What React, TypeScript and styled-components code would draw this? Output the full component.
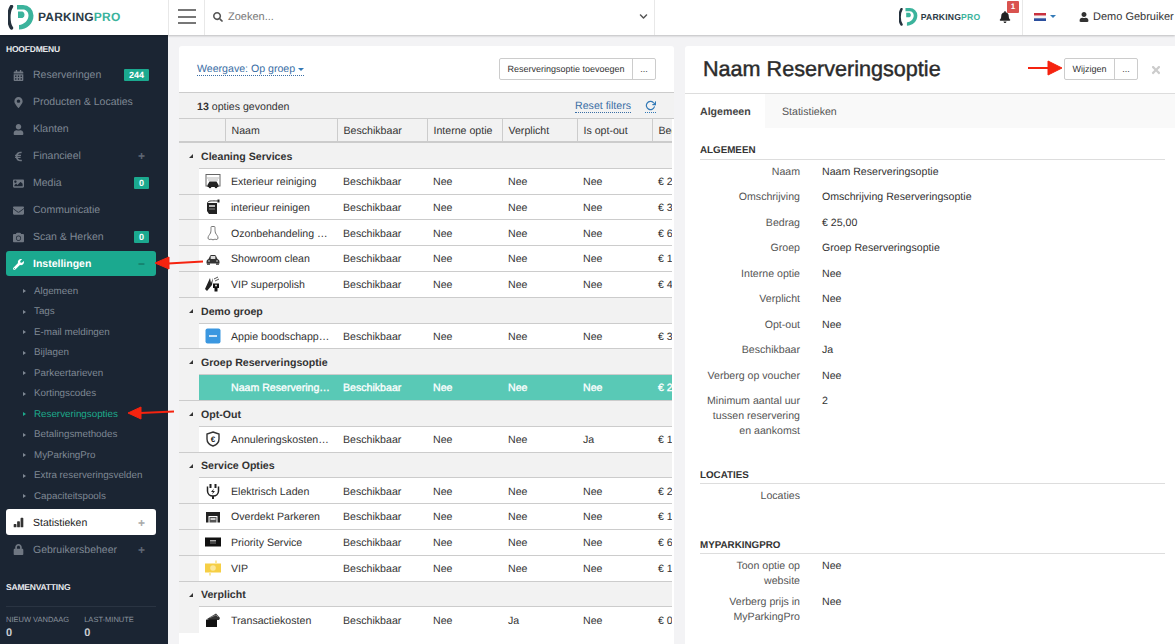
import React from "react";
import styled, { createGlobalStyle } from "styled-components";
import { FaCalendarAlt, FaMapMarkerAlt, FaUser, FaEuroSign, FaImage, FaEnvelope, FaCamera, FaWrench, FaLock, FaBell, FaSearch, FaTimes, FaChevronDown } from "react-icons/fa";
import { BsBarChartFill } from "react-icons/bs";
import { FiRotateCw } from "react-icons/fi";

const Global = createGlobalStyle`
  html, body { margin: 0; padding: 0; height: 100%; overflow: hidden; background: #f3f3f5; }
  body { font-family: "Liberation Sans", Arial, sans-serif; font-size: 10.6px; color: #333; text-rendering: geometricPrecision; }
  * { box-sizing: border-box; }
`;

const Page = styled.div`position: relative; width: 1175px; height: 644px; overflow: hidden; display: flex; flex-direction: column;`;
const Header = styled.header`height: 35px; flex: none; display: flex; align-items: stretch; background: #fff; box-shadow: 0 1px 2px rgba(0,0,0,.22); position: relative; z-index: 2;`;
const LogoBox = styled.div`width: 168px; display: flex; align-items: center; padding: 0 0 1px 8px; flex: none;`;
const LogoText = styled.span<{ $s: number }>`font-size: ${p => p.$s}px; font-weight: 700; letter-spacing: .2px; color: #2b3a46; margin-left: ${p => p.$s > 10 ? 4 : 3}px; b { color: #3bb39c; font-weight: 700; }`;
const Burger = styled.div`width: 37px; flex: none; border-left: 1px solid #e8e8e8; border-right: 1px solid #e8e8e8; display: flex; flex-direction: column; justify-content: center; align-items: center; gap: 4.5px; padding-bottom: 2px; i { display: block; width: 18px; height: 2px; background: #777; }`;
const Search = styled.div`width: 450px; flex: none; border-right: 1px solid #e8e8e8; display: flex; align-items: center; padding: 0 6px 2px 8px; color: #777; gap: 5px; font-size: 11px; svg { color: #555; } span { flex: 1; }`;
const HeaderRight = styled.div`flex: 1; display: flex; align-items: center; position: relative; padding-bottom: 2px;`;
const MiniLogo = styled.div`margin-left: 244px; display: flex; align-items: center; width: 85px;`;
const BellBox = styled.div`position: relative; margin-left: 15px; width: 14px; color: #222; display: flex; align-items: center;`;
const Badge1 = styled.span`position: absolute; left: 8px; top: -10px; width: 12px; height: 12px; background: #d9534f; color: #fff; font-size: 8px; font-weight: 700; text-align: center; line-height: 12px; border-radius: 1px;`;
const Sep = styled.div`width: 1px; align-self: stretch; background: #e8e8e8; margin: 0 0 -2px 9px;`;
const FlagBox = styled.div`display: flex; align-items: center; margin-left: 11px; gap: 4px;`;
const Caret = styled.span<{ $c?: string }>`display: inline-block; border-left: 3px solid transparent; border-right: 3px solid transparent; border-top: 3px solid ${p => p.$c || "#337ab7"};`;
const UserBox = styled.div`display: flex; align-items: center; margin-left: 23px; gap: 3px; color: #333; white-space: nowrap; font-size: 11px; svg { margin-right: 1px; }`;

const Body = styled.div`flex: 1; display: flex; min-height: 0;`;
const Side = styled.nav`width: 168px; flex: none; background: #1b2533; padding: 10px 12px 0 6px; margin-top: -1px;`;
const SideTitle = styled.div`font-size: 8.5px; font-weight: 700; color: #e8eaed; height: 13px; line-height: 11px; margin-bottom: 4px; text-transform: uppercase; letter-spacing: -.2px; white-space: nowrap;`;
const Item = styled.div<{ $v?: string }>`
  height: 27px; display: flex; align-items: center; border-radius: 3px; font-size: 10.5px;
  padding: 1px 2px 0 7px; position: relative;
  ${p => p.$v === "active" ? "background:#1ba98f;color:#fff;font-weight:700;height:25px;margin:1px 0;" : p.$v === "white" ? "background:#fff;color:#222;height:26px;margin:0.5px 0;" : "color:#7f8894;"}
`;
const ItemIcon = styled.span<{ $c?: string }>`width: 20px; flex: none; display: flex; align-items: center; color: ${p => p.$c || "#6f7782"};`;
const ItemLabel = styled.span`flex: 1; white-space: nowrap;`;
const Pill = styled.span`background: #1ba98f; color: #fff; font-size: 9px; font-weight: 700; height: 12px; line-height: 12px; padding: 0 5px; border-radius: 1px; margin-right: 5px;`;
const Plus = styled.span<{ $c?: string }>`color: ${p => p.$c || "#5e6773"}; font-size: 12px; font-weight: 700; margin-right: 9px; line-height: 1;`;
const SubList = styled.div`padding: 4px 0 2px 17px;`;
const SubItem = styled.div<{ $on?: boolean }>`height: 20.5px; display: flex; align-items: center; font-size: 9.8px; color: ${p => p.$on ? "#1dab8c" : "#7f8894"}; font-weight: 400; white-space: nowrap; &::before { content: ""; border-left: 3px solid ${p => p.$on ? "#1dab8c" : "#7f8894"}; border-top: 2.5px solid transparent; border-bottom: 2.5px solid transparent; margin-right: 8px; }`;
const Summary = styled.div`margin-top: 19px;`;
const SumLine = styled.div`border-top: 1px solid #2a3442; margin-top: 11px; padding-top: 8px; display: flex; gap: 15px;`;
const SumCol = styled.div`font-size: 7.5px; color: #8a929d; line-height: 10px; white-space: nowrap; b { display: block; color: #c9cdd2; font-size: 11px; line-height: 14px; margin-top: 1px; }`;

const Main = styled.main`flex: 1; display: flex; gap: 11px; padding: 11px 0 0 11px; min-width: 0;`;
const LeftCard = styled.section`width: 495px; flex: none; background: #fff; border-radius: 3px 3px 0 0; overflow: hidden; display: flex; flex-direction: column;`;
const Toolbar = styled.div`height: 47px; flex: none; display: flex; align-items: center; justify-content: space-between; padding: 0 18px; border-bottom: 1px solid #ccc;`;
const ViewLink = styled.span`color: #3a6ea5; font-size: 10.6px; border-bottom: 1px dotted #3a6ea5; line-height: 12px; display: flex; align-items: center; gap: 3px; margin-top: 1px;`;
const BtnGroup = styled.div`display: flex; height: 22px; border: 1px solid #ccc; border-radius: 2px; background: #fff; margin-top: -1px;`;
const Btn = styled.div<{ $w: number }>`width: ${p => p.$w}px; display: flex; align-items: center; justify-content: center; font-size: 9px; color: #333; & + & { border-left: 1px solid #ccc; }`;
const CountBar = styled.div`height: 26px; flex: none; background: #f2f2f2; display: flex; align-items: center; padding: 2px 18px 0 18px; border-bottom: 1px solid #ccc; b { color: #333; } `;
const ResetLink = styled.span`margin-left: auto; color: #3a6ea5; border-bottom: 1px dotted #3a6ea5; line-height: 12px;`;
const RefreshIcon = styled.span`margin-left: 14px; color: #337ab7; border-bottom: 1px dotted #337ab7; display: flex; height: 13px;`;
const TableWrap = styled.div`width: 493px; overflow: hidden; background: #fff;`;
const HeadRow = styled.div`display: grid; grid-template-columns: 47px 112px 90px 75px 75px 75px 60px; height: 24px; background: #f2f2f2; border-bottom: 2px solid #ccc; align-items: stretch;`;
const HeadCell = styled.div`display: flex; align-items: center; padding: 2px 0 0 5.5px; color: #333; border-right: 1px solid #ccc; white-space: nowrap; overflow: hidden; &:last-child { border-right: 0; }`;
const GroupRow = styled.div`height: 25.8px; background: #f2f2f2; padding-left: 20px;`;
const GroupInner = styled.div`height: 100%; border-bottom: 1px solid #ccc; display: flex; align-items: center; padding: 3px 0 0 2px; font-weight: 700; color: #333; position: relative; &::before { content: ""; position: absolute; left: -10px; top: 11px; border-right: 4px solid #333; border-top: 4px solid transparent; }`;
const Row = styled.div<{ $last?: boolean }>`height: 25.8px; background: #f2f2f2; padding-left: 20px; ${p => p.$last ? "" : "border-bottom: 1px solid #ccc;"}`;
const RowInner = styled.div<{ $sel?: boolean }>`height: 100%; display: grid; grid-template-columns: 27px 112px 90px 75px 75px 75px 60px; background: ${p => p.$sel ? "#59c9b6" : "#fff"}; color: ${p => p.$sel ? "#fff" : "#333"}; ${p => p.$sel ? "-webkit-text-stroke: .3px #fff;" : ""} align-items: center;`;
const IconCell = styled.div`display: flex; justify-content: center; align-items: center; padding-left: 1px;`;
const Cell = styled.div`padding: 1.6px 0 0 5px; white-space: nowrap; overflow: hidden; text-overflow: ellipsis;`;
const NameCell = styled(Cell)`padding-right: 8px;`;

const RightCard = styled.section`flex: 1; background: #fff; border-radius: 3px 0 0 0; overflow: hidden; min-width: 0;`;
const DetailHead = styled.div`height: 48px; display: flex; align-items: center; padding: 0 13px 0 18px; border-bottom: 1px solid #ddd;`;
const Title = styled.h1`margin: 0 0 1px; font-size: 21.6px; font-weight: 400; -webkit-text-stroke: .45px #2b2b2b; color: #2b2b2b; flex: 1; white-space: nowrap;`;
const CloseIcon = styled.span`color: #ccc; margin-left: 12px; display: flex;`;
const Tabs = styled.div`height: 34px; background: #f9f9f9; display: flex;`;
const Tab = styled.div<{ $on?: boolean }>`width: ${p => p.$on ? 80 : 88}px; display: flex; align-items: center; padding: 1px 0 0 ${p => p.$on ? 15 : 17}px; ${p => p.$on ? "background:#fff;font-weight:700;color:#444;" : "color:#555;"}`;
const Details = styled.div`padding: 0 10px 0 15px;`;
const SectionHead = styled.div<{ $mt: number }>`margin-top: ${p => p.$mt}px; height: 15.5px; font-size: 9.8px; font-weight: 700; color: #333; border-bottom: 1px solid #ddd; line-height: 13px; text-transform: uppercase;`;
const DRow = styled.div<{ $tight?: boolean }>`display: grid; grid-template-columns: 100px 1fr; column-gap: 22px; line-height: 15px; padding-top: 5.25px; padding-bottom: ${p => p.$tight ? 0.25 : 5.25}px;`;
const DLabel = styled.div`text-align: right; color: #555;`;
const DValue = styled.div`color: #333;`;

const Arrows = styled.svg`position: absolute; left: 0; top: 0; pointer-events: none; z-index: 5;`;

const PLogo = ({ h }: { h: number }) => (
  <svg width={h * 26 / 25} height={h} viewBox="0 0 26 25">
    <path d="M3.5 1.5 C0 7 0 18 3.5 23" fill="none" stroke="#24303c" strokeWidth="3.4" strokeLinecap="round" />
    <path d="M9 0 H15 A10.5 10.5 0 0 1 25.5 10.5 C25.5 18.5 19 24.5 11 24.5 V20 C16 19.5 20.5 15.5 20.5 10.5 C20.5 7 18 4.5 15 4.5 H9Z" fill="#3bb39c" />
    <path d="M10 6.5 H14.5 A3.6 3.6 0 0 1 14.5 13 H10Z" fill="#3bb39c" />
  </svg>
);

const s = { width: 16, height: 16, viewBox: "0 0 16 16" };
const Icons: Record<string, React.ReactNode> = {
  wash: <svg {...s}><rect x="1" y="1.5" width="14" height="11.5" fill="none" stroke="#666" strokeWidth="1" /><path d="M2 5 H14 M3 7 H13" stroke="#999" strokeWidth=".7" /><path d="M2.5 12 L4.5 8.5 H11.5 L13.5 12 V14 H2.5Z" fill="#222" /><circle cx="5" cy="14" r="1.3" fill="#222" /><circle cx="11" cy="14" r="1.3" fill="#222" /></svg>,
  vac: <svg {...s}><path d="M3 5 C1 1 8 2 14 2" fill="none" stroke="#333" strokeWidth="1" /><rect x="12.5" y="0.5" width="2" height="3" fill="#222" /><path d="M2 4 H12 V15 H4 L2 12Z" fill="#222" /><rect x="4" y="6" width="6" height="2" fill="#bbb" /><rect x="4" y="9.5" width="6" height="1" fill="#888" /></svg>,
  ozon: <svg {...s}><path d="M6.5 1.5 C5.5 1.5 6.5 5 5.5 8 C4.5 10 3 11 3 13 C3 14.5 5 15 6 14 C7 15 9 15 10 14 C11 15 13 14.5 13 13 C13 11 11.5 10 10.5 8 C9.5 5 10.5 1.5 9.5 1.5Z" fill="none" stroke="#777" strokeWidth="1" /></svg>,
  car: <svg {...s}><path d="M1.5 11 C1.5 9 2.5 8.5 3.5 8 L5 5 C5.3 4.3 6 4 7 4 H9 C10 4 10.7 4.3 11 5 L12.5 8 C13.5 8.5 14.5 9 14.5 11 V12.5 H1.5Z" fill="#333" /><rect x="5.7" y="5" width="4.6" height="3" fill="#ddd" /><rect x="2" y="12.5" width="3" height="1.2" fill="#222" /><rect x="11" y="12.5" width="3" height="1.2" fill="#222" /><circle cx="4" cy="10" r=".8" fill="#ddd" /><circle cx="12" cy="10" r=".8" fill="#ddd" /></svg>,
  polish: <svg {...s}><path d="M0 13 L5 2 L6 7 L8 2 L7 9 L2 15Z" fill="#222" /><path d="M9 3 L13 1 M10 5 L14 3" stroke="#555" /><path d="M8 7.5 H14 V12 H12.5 V15.5 H9.5 V12 H8Z" fill="#111" /><circle cx="11" cy="9.5" r="1" fill="#ddd" /></svg>,
  appie: <svg {...s}><rect width="15" height="15" x=".5" y=".5" rx="2" fill="#3b97e0" /><rect x="4" y="7" width="8" height="2" fill="#cde4f7" /></svg>,
  shield: <svg {...s}><path d="M8 1 L14 3 V8 C14 12 11 14 8 15 C5 14 2 12 2 8 V3Z" fill="none" stroke="#333" strokeWidth="1.4" /><text x="8" y="11" fontSize="8" fontWeight="700" textAnchor="middle" fill="#222" fontFamily="Liberation Sans">€</text></svg>,
  plug: <svg {...s}><path d="M5.5 1 V5 M10.5 1 V5" stroke="#222" strokeWidth="2" /><path d="M2.5 3.5 V8 C2.5 11 5 13 8 13 C11 13 13.5 11 13.5 8 V3.5" fill="none" stroke="#222" strokeWidth="1.5" /><path d="M8 13 V16" stroke="#222" strokeWidth="2" /><path d="M9 5.5 L6 9 H8 L7 11.5 L10 8 H8Z" fill="#222" /></svg>,
  garage: <svg {...s}><path d="M1 3 H15 V13.5 H12.5 V7 H3.5 V13.5 H1Z" fill="#222" /><rect x="4.5" y="8" width="7" height="5.5" fill="#555" /><rect x="5.5" y="9" width="5" height="2" fill="#ccc" /></svg>,
  prio: <svg {...s}><rect x="0" y="3.5" width="16" height="9" fill="#111" /><rect x="5" y="6" width="6" height="1.5" fill="#aaa" /><rect x="5" y="8.5" width="6" height="1" fill="#777" /></svg>,
  vip: <svg {...s}><rect x="0" y="3.5" width="16" height="9" fill="#f6cf45" /><circle cx="8" cy="8" r="2.8" fill="#fbe79a" /><path d="M11 0.5 V3 M5 13 V15.5" stroke="#f6cf45" /></svg>,
  cards: <svg {...s}><path d="M2 7 L11 1.5 L15 6 L14 8 H4Z" fill="#333" /><path d="M5 5.5 L11 3 L13 5" stroke="#aaa" strokeWidth=".6" fill="none" /><rect x="1" y="7.5" width="11" height="7.5" rx=".5" fill="#111" /></svg>,
};

type R = [string, string, string, string, string, string];
const groups: { name: string; rows: R[] }[] = [
  { name: "Cleaning Services", rows: [
    ["wash", "Exterieur reiniging", "Nee", "Nee", "Nee", "€ 25,00"],
    ["vac", "interieur reinigen", "Nee", "Nee", "Nee", "€ 35,00"],
    ["ozon", "Ozonbehandeling voertuig", "Nee", "Nee", "Nee", "€ 65,00"],
    ["car", "Showroom clean", "Nee", "Nee", "Nee", "€ 15,00"],
    ["polish", "VIP superpolish", "Nee", "Nee", "Nee", "€ 45,00"],
  ] },
  { name: "Demo groep", rows: [["appie", "Appie boodschappen", "Nee", "Nee", "Nee", "€ 30,00"]] },
  { name: "Groep Reserveringsoptie", rows: [["", "Naam Reserveringsoptie", "Nee", "Nee", "Nee", "€ 25,00"]] },
  { name: "Opt-Out", rows: [["shield", "Annuleringskosten verzekering", "Nee", "Nee", "Ja", "€ 10,00"]] },
  { name: "Service Opties", rows: [
    ["plug", "Elektrisch Laden", "Nee", "Nee", "Nee", "€ 25,00"],
    ["garage", "Overdekt Parkeren", "Nee", "Nee", "Nee", "€ 15,00"],
    ["prio", "Priority Service", "Nee", "Nee", "Nee", "€ 65,00"],
    ["vip", "VIP", "Nee", "Nee", "Nee", "€ 15,00"],
  ] },
  { name: "Verplicht", rows: [["cards", "Transactiekosten", "Nee", "Ja", "Nee", "€ 0,95"]] },
];

const subs = ["Algemeen", "Tags", "E-mail meldingen", "Bijlagen", "Parkeertarieven", "Kortingscodes", "Reserveringsopties", "Betalingsmethodes", "MyParkingPro", "Extra reserveringsvelden", "Capaciteitspools"];
const details: [string, string][] = [
  ["Naam", "Naam Reserveringsoptie"], ["Omschrijving", "Omschrijving Reserveringsoptie"], ["Bedrag", "€ 25,00"],
  ["Groep", "Groep Reserveringsoptie"], ["Interne optie", "Nee"], ["Verplicht", "Nee"], ["Opt-out", "Nee"],
  ["Beschikbaar", "Ja"], ["Verberg op voucher", "Nee"],
];

const Flag = () => (
  <svg width="12" height="8" viewBox="0 0 12 8"><rect width="12" height="2.7" fill="#c8313e" /><rect y="2.7" width="12" height="2.6" fill="#f4f4f4" /><rect y="5.3" width="12" height="2.7" fill="#2b4f9e" /></svg>
);

export default function App() {
  return (
    <Page>
      <Global />
      <Header>
        <LogoBox><PLogo h={25} /><LogoText $s={12}>PARKING<b>PRO</b></LogoText></LogoBox>
        <Burger><i /><i /><i /></Burger>
        <Search><FaSearch size={10} /><span>Zoeken...</span><FaChevronDown size={9} /></Search>
        <HeaderRight>
          <MiniLogo><PLogo h={18} /><LogoText $s={8.6}>PARKING<b>PRO</b></LogoText></MiniLogo>
          <BellBox><FaBell size={12} /><Badge1>1</Badge1></BellBox>
          <Sep />
          <FlagBox><Flag /><Caret /></FlagBox>
          <UserBox><FaUser size={10} />Demo Gebruiker<Caret $c="#333" /></UserBox>
        </HeaderRight>
      </Header>
      <Body>
        <Side>
          <SideTitle>Hoofdmenu</SideTitle>
          <Item><ItemIcon><FaCalendarAlt size={11} /></ItemIcon><ItemLabel>Reserveringen</ItemLabel><Pill>244</Pill></Item>
          <Item><ItemIcon><FaMapMarkerAlt size={11} /></ItemIcon><ItemLabel>Producten &amp; Locaties</ItemLabel></Item>
          <Item><ItemIcon><FaUser size={11} /></ItemIcon><ItemLabel>Klanten</ItemLabel></Item>
          <Item><ItemIcon><FaEuroSign size={11} /></ItemIcon><ItemLabel>Financieel</ItemLabel><Plus>+</Plus></Item>
          <Item><ItemIcon><FaImage size={11} /></ItemIcon><ItemLabel>Media</ItemLabel><Pill>0</Pill></Item>
          <Item><ItemIcon><FaEnvelope size={11} /></ItemIcon><ItemLabel>Communicatie</ItemLabel></Item>
          <Item><ItemIcon><FaCamera size={11} /></ItemIcon><ItemLabel>Scan &amp; Herken</ItemLabel><Pill>0</Pill></Item>
          <Item $v="active"><ItemIcon $c="#fff"><FaWrench size={11} /></ItemIcon><ItemLabel>Instellingen</ItemLabel><Plus $c="#137a68">−</Plus></Item>
          <SubList>
            {subs.map(x => <SubItem key={x} $on={x === "Reserveringsopties"}>{x}</SubItem>)}
          </SubList>
          <Item $v="white"><ItemIcon $c="#333"><BsBarChartFill size={11} /></ItemIcon><ItemLabel>Statistieken</ItemLabel><Plus $c="#aaa">+</Plus></Item>
          <Item><ItemIcon><FaLock size={11} /></ItemIcon><ItemLabel>Gebruikersbeheer</ItemLabel><Plus>+</Plus></Item>
          <Summary>
            <SideTitle>Samenvatting</SideTitle>
            <SumLine>
              <SumCol>NIEUW VANDAAG<b>0</b></SumCol>
              <SumCol>LAST-MINUTE<b>0</b></SumCol>
            </SumLine>
          </Summary>
        </Side>
        <Main>
          <LeftCard>
            <Toolbar>
              <ViewLink>Weergave: Op groep <Caret /></ViewLink>
              <BtnGroup><Btn $w={132}>Reserveringsoptie toevoegen</Btn><Btn $w={23}>...</Btn></BtnGroup>
            </Toolbar>
            <CountBar><span><b>13</b> opties gevonden</span><ResetLink>Reset filters</ResetLink><RefreshIcon><FiRotateCw size={11} strokeWidth={2.6} /></RefreshIcon></CountBar>
            <TableWrap>
              <HeadRow>
                <HeadCell />
                <HeadCell>Naam</HeadCell><HeadCell>Beschikbaar</HeadCell><HeadCell>Interne optie</HeadCell><HeadCell>Verplicht</HeadCell><HeadCell>Is opt-out</HeadCell><HeadCell>Bedrag</HeadCell>
              </HeadRow>
              {groups.map((g, gi) => (
                <React.Fragment key={g.name}>
                  <GroupRow><GroupInner>{g.name}</GroupInner></GroupRow>
                  {g.rows.map(r => (
                    <Row key={r[1]} $last={gi === groups.length - 1}>
                      <RowInner $sel={r[1] === "Naam Reserveringsoptie"}>
                        <IconCell>{Icons[r[0]]}</IconCell>
                        <NameCell>{r[1]}</NameCell>
                        <Cell>Beschikbaar</Cell>
                        <Cell>{r[2]}</Cell><Cell>{r[3]}</Cell><Cell>{r[4]}</Cell><Cell>{r[5]}</Cell>
                      </RowInner>
                    </Row>
                  ))}
                </React.Fragment>
              ))}
            </TableWrap>
          </LeftCard>
          <RightCard>
            <DetailHead>
              <Title>Naam Reserveringsoptie</Title>
              <BtnGroup><Btn $w={49}>Wijzigen</Btn><Btn $w={23}>...</Btn></BtnGroup>
              <CloseIcon><FaTimes size={12} /></CloseIcon>
            </DetailHead>
            <Tabs><Tab $on>Algemeen</Tab><Tab>Statistieken</Tab></Tabs>
            <Details>
              <SectionHead $mt={16}>Algemeen</SectionHead>
              {details.map(([a, b]) => <DRow key={a}><DLabel>{a}</DLabel><DValue>{b}</DValue></DRow>)}
              <DRow><DLabel>Minimum aantal uur tussen reservering en aankomst</DLabel><DValue>2</DValue></DRow>
              <SectionHead $mt={24}>Locaties</SectionHead>
              <DRow><DLabel>Locaties</DLabel><DValue /></DRow>
              <SectionHead $mt={29}>MyParkingPro</SectionHead>
              <DRow $tight><DLabel>Toon optie op website</DLabel><DValue>Nee</DValue></DRow>
              <DRow><DLabel>Verberg prijs in MyParkingPro</DLabel><DValue>Nee</DValue></DRow>
            </Details>
          </RightCard>
        </Main>
      </Body>
      <Arrows width="1175" height="644" viewBox="0 0 1175 644">
        <g fill="#f5230f" stroke="#f5230f">
          <path d="M203 261.5 L168 263.5" strokeWidth="2" />
          <path d="M155 263 L169 257 L169 269Z" />
          <path d="M174 411.5 L140 413" strokeWidth="2" />
          <path d="M128 413 L141 407 L141 419Z" />
          <path d="M1028 68 L1050 68" strokeWidth="2" />
          <path d="M1062 68 L1048 61 L1048 75Z" />
        </g>
      </Arrows>
    </Page>
  );
}
